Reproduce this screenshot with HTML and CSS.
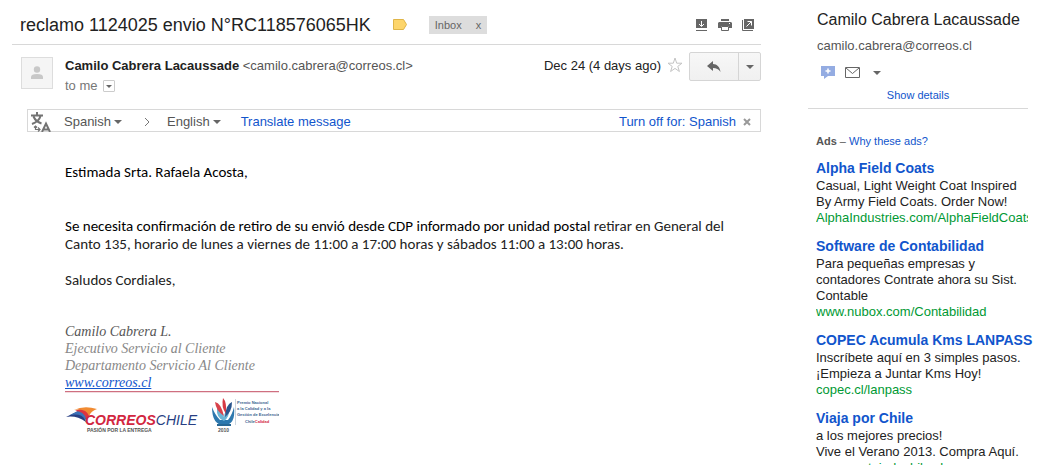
FILE: index.html
```html
<!DOCTYPE html>
<html lang="es">
<head>
    <meta charset="UTF-8">
    <meta name="viewport" content="width=device-width, initial-scale=1.0">
    <title>reclamo 1124025 envio N°RC118576065HK</title>
    <link rel="stylesheet" href="styles.css">
</head>
<body>

    <main class="mail">
        <header class="subject-bar">
            <h1>reclamo 1124025 envio N°RC118576065HK</h1>
            <svg class="marker" width="14" height="11" viewBox="0 0 14 11"><path d="M.5.5h10l3 5-3 5H.5z" fill="#fdd56b" stroke="#dfb548"/></svg>
            <span class="label">Inbox <button type="button" class="label-x" aria-label="Remove label">x</button></span>
            <div class="tools">
                <button type="button" aria-label="Download">
                    <svg width="12" height="12" viewBox="0 0 12 12"><path d="M0 0h11v9H0zM0 11h11v1H0z" fill="#666"/><path d="M5.500 2v5M3 5l2.500 2.500L8 5" fill="none" stroke="#fff"/></svg>
                </button>
                <button type="button" aria-label="Print">
                    <svg width="14" height="12" viewBox="0 0 14 12"><path d="M3 0h8v2H3zM1 3h12l1 1v5h-3V7H3v2H0V4z" fill="#666"/><path d="M3.500 7.500h7v4h-7z" fill="#fff" stroke="#666"/><path d="M11 4h1v1h-1z" fill="#fff"/></svg>
                </button>
                <button type="button" aria-label="Open in new window">
                    <svg width="12" height="12" viewBox="0 0 12 12"><path d="M2 0h10v10H2z" fill="#666"/><path d="M.5 1v10.500H11" fill="none" stroke="#666"/><path d="M4.500 7.500l5-5M5.500 2.500h4v4" fill="none" stroke="#fff"/></svg>
                </button>
            </div>
        </header>

        <section class="sender">
            <div class="avatar">
                <svg width="14" height="14" viewBox="0 0 14 14"><circle cx="7" cy="3.500" r="3.200" fill="#c8c8c8"/><path d="M1 13v-2q0-3 6-3t6 3v2z" fill="#c8c8c8"/></svg>
            </div>
            <div class="who">
                <p><strong>Camilo Cabrera Lacaussade</strong> <span class="address">&lt;camilo.cabrera@correos.cl&gt;</span></p>
                <p class="to">to me <button type="button" class="details" aria-label="Show details"><i class="caret"></i></button></p>
            </div>
            <span class="date">Dec 24 (4 days ago)</span>
            <button type="button" class="star" aria-label="Star">
                <svg width="16" height="16" viewBox="0 0 16 16"><path d="M8 1l1.700 5.200H15l-4.200 3.200 1.600 5.100L8 11.400l-4.400 3.100 1.600-5.100L1 6.200h5.300z" fill="#fff" stroke="#c4c4c4"/></svg>
            </button>
            <div class="reply-group">
                <button type="button" class="reply" aria-label="Reply">
                    <svg width="14" height="12" viewBox="0 0 14 12"><path d="M6 0v3c4 0 7 3 7.500 8C11.500 8 9.500 7 6 7v3L0 5z" fill="#666"/></svg>
                </button>
                <button type="button" class="more" aria-label="More"><i class="caret"></i></button>
            </div>
        </section>

        <section class="translate">
            <svg width="20" height="20" viewBox="0 0 20 20" fill="none" stroke="#737373"><path d="M0 3.500h12M6 0v3M9.500 4C8.500 8 5 10.500 1 12M2.500 4.500C4 8 7.500 10.500 10.500 11.500" stroke-width="2"/><path d="M4.500 14v3.500H9M7 15.500l2 2-2 2M3 15.500l1.500-1.500L6 15.500" stroke-width="1.200"/><path d="M11 20L15 11.500 19 20M12.500 17.500h5" stroke-width="2"/></svg>
            <button type="button" class="lang from">Spanish<i class="caret"></i></button>
            <svg class="arrow" width="6" height="10" viewBox="0 0 6 10"><path d="M1 1l4 4-4 4" fill="none" stroke="#777"/></svg>
            <button type="button" class="lang">English<i class="caret"></i></button>
            <a href="#">Translate message</a>
            <a href="#" class="turn-off">Turn off for: Spanish</a>
            <button type="button" class="close" aria-label="Close">
                <svg width="8" height="8" viewBox="0 0 8 8"><path d="M1 1l6 6M7 1L1 7" stroke="#999" stroke-width="2"/></svg>
            </button>
        </section>

        <article class="message">
            <p class="greeting">Estimada Srta. Rafaela Acosta,</p>
            <p><span class="black">Se necesita confirmación de retiro de su envió desde CDP informado por unidad postal</span> retirar en General del<br>Canto 135, horario de lunes a viernes de 11:00 a 17:00 horas y sábados 11:00 a 13:00 horas.</p>
            <p>Saludos Cordiales,</p>

            <div class="signature">
                <span class="name">Camilo Cabrera L.</span><br>
                Ejecutivo Servicio al Cliente<br>
                Departamento Servicio Al Cliente<br>
                <a href="#">www.correos.cl</a>
            </div>
            <svg class="logos" width="214" height="44" viewBox="0 0 214 44">
                <path d="M0 .5h214" stroke="#cf6f80" stroke-width="1.500"/>
                <path d="M1 26L13 20Q19 22 21 31Q11 24 1 26z" fill="#283f83"/>
                <path d="M5 24L17 18Q22 20 23 26L20 29Q17 22 5 24z" fill="#3c72b8"/>
                <path d="M10 20Q17 16 22 19Q25 21 24 25L21 28Q19 20 10 20z" fill="#dc3440"/>
                <path d="M9 19Q19 14 32 18Q26 20 24 25Q21 17 9 19z" fill="#f18b32"/>
                <text x="20" y="34" class="brand"><tspan class="red">CORREOS</tspan><tspan class="thin">CHILE</tspan></text>
                <text x="22" y="41" class="motto">PASIÓN POR LA ENTREGA</text>
                <path d="M147 16q0 18 12 18t10-18q-2 8-6 13h-8q-5-5-8-13z" fill="#2d78ae"/>
                <path d="M152 17q-1 10 7 13 6-4 5-14-4 3-5 10-1-6-7-9z" fill="#6db5d5"/>
                <path d="M158 7q4 4 3 16-5-7-3-16z" fill="#d53945"/>
                <path d="M150 11q6 1 9 14-8-5-9-14z" fill="#d8424b"/>
                <path d="M167 11q-6 2-7 15 7-5 7-15z" fill="#29558d"/>
                <path d="M152 34h14" stroke="#286895" stroke-width="2"/>
                <path d="M170.500 8v26" stroke="#cbd5df"/>
                <text class="award" x="172" y="13">Premio Nacional</text>
                <text class="award" x="172" y="19">a la Calidad y a la</text>
                <text class="award" x="172" y="25">Gestión de Excelencia</text>
                <text class="award" x="180" y="32">Chile<tspan class="red">Calidad</tspan></text>
                <text class="motto" x="153" y="41">2010</text>
            </svg>
        </article>
    </main>

    <aside class="side">
        <section class="contact">
            <h2>Camilo Cabrera Lacaussade</h2>
            <p>camilo.cabrera@correos.cl</p>
            <div class="actions">
                <button type="button" aria-label="Chat">
                    <svg width="14" height="13" viewBox="0 0 14 13"><path d="M0 0h14v10H7l-4 3v-3H0z" fill="#94ace2"/><path d="M7 2.500v5M4.500 5h5" stroke="#fff" stroke-width="1.500"/></svg>
                </button>
                <button type="button" aria-label="Email">
                    <svg width="15" height="11" viewBox="0 0 15 11"><path d="M.5.5h14v10H.5zM1 1l6.500 5.500L14 1" fill="none" stroke="#666"/></svg>
                </button>
                <button type="button" aria-label="More"><i class="caret"></i></button>
            </div>
            <a href="#" class="show">Show details</a>
        </section>

        <p class="why"><b>Ads</b> – <a href="#">Why these ads?</a></p>

        <div class="ad">
            <a href="#" class="ad-title">Alpha Field Coats</a>
            <p>Casual, Light Weight Coat Inspired<br>By Army Field Coats. Order Now!</p>
            <a href="#" class="ad-url">AlphaIndustries.com/AlphaFieldCoats</a>
        </div>
        <div class="ad">
            <a href="#" class="ad-title">Software de Contabilidad</a>
            <p>Para pequeñas empresas y<br>contadores Contrate ahora su Sist.<br>Contable</p>
            <a href="#" class="ad-url">www.nubox.com/Contabilidad</a>
        </div>
        <div class="ad">
            <a href="#" class="ad-title">COPEC Acumula Kms LANPASS</a>
            <p>Inscríbete aquí en 3 simples pasos.<br>¡Empieza a Juntar Kms Hoy!</p>
            <a href="#" class="ad-url">copec.cl/lanpass</a>
        </div>
        <div class="ad">
            <a href="#" class="ad-title">Viaja por Chile</a>
            <p>a los mejores precios!<br>Vive el Verano 2013. Compra Aquí.</p>
            <a href="#" class="ad-url">www.ventajadechile.cl</a>
        </div>
    </aside>

</body>
</html>
```
FILE: styles.css
```css
* {
    margin: 0;
    padding: 0;
    box-sizing: border-box;
}

body {
    display: flex;
    gap: 47px;
    height: 100vh;
    padding: 0 24px 0 12px;
    overflow: hidden;
    background: #fff;
    color: #222;
    font-family: Arial, "Liberation Sans", sans-serif;
    font-size: 13px;
    line-height: 16px;
}

a {
    color: #15c;
    text-decoration: none;
}

button {
    background: none;
    border: none;
    color: inherit;
    font: inherit;
    cursor: pointer;
}

svg {
    display: block;
    flex: none;
}

.caret {
    display: inline-block;
    border: 4px solid transparent;
    border-top-color: #666;
    border-bottom: none;
}

.mail {
    flex: 1;
    min-width: 0;
}

/* Subject line */
.subject-bar {
    display: flex;
    align-items: center;
    height: 45px;
    padding: 5px 7px 0 8px;
    border-bottom: 1px solid #d8d8d8;
}

h1 {
    font-size: 18px;
    font-weight: normal;
    white-space: nowrap;
}

.marker {
    margin: 0 22px;
}

.label {
    display: flex;
    gap: 14px;
    padding: 1px 6px;
    background: #ddd;
    color: #666;
    font-size: 11px;
}

.tools {
    display: flex;
    gap: 10px;
    margin-left: auto;
}

/* Sender */
.sender {
    display: flex;
    align-items: flex-start;
    padding: 7px 0 0 9px;
}

.avatar {
    display: flex;
    align-items: center;
    justify-content: center;
    width: 32px;
    height: 32px;
    margin: 5px 12px 0 0;
    background: #f5f5f5;
    border: 1px solid #ddd;
}

.who {
    flex: 1;
    padding-top: 6px;
}

.address {
    color: #555;
}

.to {
    display: flex;
    align-items: center;
    gap: 5px;
    margin-top: 4px;
    color: #777;
}

.details {
    display: flex;
    align-items: center;
    justify-content: center;
    width: 12px;
    height: 12px;
    border: 1px solid #ccc;
    border-radius: 1px;
}

.details .caret {
    border-width: 3px 3px 0;
}

.date {
    padding-top: 6px;
}

.star {
    margin: 5px 6px 0;
}

.reply-group {
    display: flex;
    height: 29px;
    border: 1px solid #d5d5d5;
    border-radius: 2px;
    background: linear-gradient(#f7f7f7, #f0f0f0);
}

.reply,
.more {
    display: flex;
    align-items: center;
    justify-content: center;
    width: 48px;
}

.more {
    width: 22px;
    border-left: 1px solid #d5d5d5;
}

/* Translate bar */
.translate {
    display: flex;
    align-items: center;
    height: 23px;
    margin: 15px 0 0 15px;
    padding: 2px 9px 0 3px;
    border: 1px solid #d8d8d8;
    color: #555;
}

.lang {
    display: flex;
    align-items: center;
    gap: 3px;
    margin-right: 20px;
}

.from {
    margin: 0 22px 0 13px;
}

.arrow {
    margin-right: 17px;
}

.turn-off {
    margin-left: auto;
}

.close {
    margin-left: 7px;
}

/* Message */
.message {
    padding: 31px 0 0 53px;
    font-family: Calibri, Carlito, Lato, sans-serif;
    font-size: 15px;
    line-height: 18px;
}

.message p {
    margin-bottom: 18px;
}

.message .greeting {
    margin-bottom: 36px;
    color: #000;
}

.black {
    color: #000;
}

.signature {
    margin-top: 34px;
    color: #888;
    font-family: "Monotype Corsiva", "Liberation Serif", serif;
    font-size: 14px;
    font-style: italic;
    line-height: 17px;
}

.signature .name {
    color: #555;
}

.signature a {
    text-decoration: underline;
}

.brand {
    font: italic bold 14px Arial, "Liberation Sans", sans-serif;
}

.brand .thin {
    fill: #283f83;
    font-weight: normal;
}

.red {
    fill: #d22640;
}

.motto {
    fill: #555;
    font: bold 5px Arial, "Liberation Sans", sans-serif;
}

.award {
    fill: #3c6690;
    font: bold 4px Arial, "Liberation Sans", sans-serif;
}

/* Right column */
.side {
    width: 220px;
}

.contact {
    display: flex;
    flex-direction: column;
    height: 109px;
    padding: 10px 0 0 9px;
    border-bottom: 1px solid #d8d8d8;
}

h2 {
    font-size: 16px;
    font-weight: normal;
    line-height: 20px;
    white-space: nowrap;
}

.contact p {
    margin-top: 8px;
    color: #555;
}

.actions {
    display: flex;
    align-items: center;
    gap: 10px;
    margin: 12px 0 0 4px;
}

.actions .caret {
    display: block;
    margin-left: 3px;
}

.show {
    margin-top: 8px;
    padding-right: 9px;
    font-size: 11px;
    text-align: center;
}

.why {
    margin: 24px 0 9px 8px;
    color: #555;
    font-size: 11px;
}

.ad {
    margin: 0 0 10px 8px;
    white-space: nowrap;
}

.ad a {
    display: block;
}

.ad .ad-title {
    font-size: 14px;
    font-weight: bold;
    line-height: 20px;
}

.ad .ad-url {
    overflow: hidden;
    color: #093;
}
```
